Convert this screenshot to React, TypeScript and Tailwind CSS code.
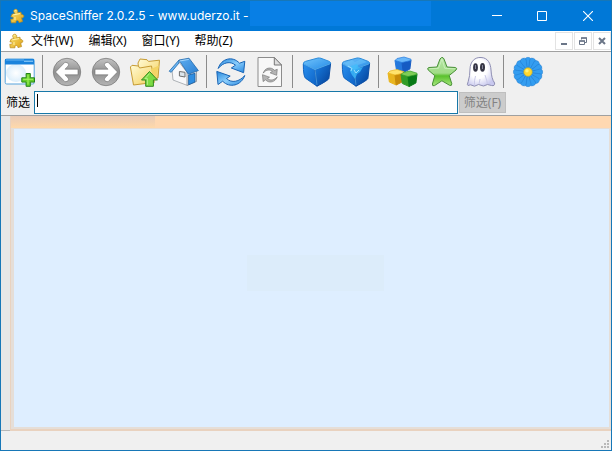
import type { ReactNode } from 'react';

interface ToolProps {
  label: string;
  children: ReactNode;
}

const menus = ['文件(W)', '编辑(X)', '窗口(Y)', '帮助(Z)'];

const PuzzleIcon = () => (
  <svg viewBox="0 0 16 16" className="h-4 w-4 shrink-0" aria-hidden="true">
    <path
      d="M3 6.2L6 5.4C4.6 4.2 4.3 2.8 5.2 1.8C6.2.8 8 1.1 8.6 2.4C8.9 3.2 8.6 4 8.7 4.8L12 4.2L12.4 6.6C13.4 6.1 14.9 6.9 14.8 8.3C14.7 9.6 13.5 10.1 12.5 9.8L13.6 13.6L10 14.6C9.9 13.2 9.2 12.3 8.2 12.4C7.2 12.5 6.8 13.4 7 14.8L2.2 14.8L1.8 11.2C3.2 11.4 4.3 11 4.3 10C4.3 9 3.2 8.8 1.9 9Z"
      fill="url(#gold)"
      stroke="#b98a1c"
      strokeWidth="0.7"
    />
    <path d="M5.8 3.2Q6.2 1.9 7.3 2.2M4.2 6.8L8 6.2L11 5.6M6 9V12" stroke="#fff3a8" fill="none" />
  </svg>
);

const Gradients = () => (
  <svg className="absolute h-0 w-0" aria-hidden="true">
    <defs>
      <linearGradient id="gold" x1="0" y1="0" x2="1" y2="1">
        <stop offset="0" stopColor="#fbe477" />
        <stop offset="1" stopColor="#dfa315" />
      </linearGradient>
      <linearGradient id="folder" x1="0" y1="0" x2="1" y2="1">
        <stop offset="0" stopColor="#fffbd5" />
        <stop offset="1" stopColor="#f5cf5b" />
      </linearGradient>
      <linearGradient id="metal" x1="0" y1="0" x2="0" y2="1">
        <stop offset="0" stopColor="#c4c4c4" />
        <stop offset="0.5" stopColor="#909090" />
        <stop offset="1" stopColor="#b5b5b5" />
      </linearGradient>
      <linearGradient id="sky" x1="0" y1="0" x2="1" y2="1">
        <stop offset="0" stopColor="#2486dc" />
        <stop offset="0.5" stopColor="#8acdfb" />
        <stop offset="1" stopColor="#2788e0" />
      </linearGradient>
      <linearGradient id="roof" x1="0" y1="0" x2="1" y2="1">
        <stop offset="0" stopColor="#5eaef0" />
        <stop offset="1" stopColor="#2b7fd2" />
      </linearGradient>
      <linearGradient id="cubeTop" x1="0" y1="0" x2="1" y2="1">
        <stop offset="0" stopColor="#72c4fb" />
        <stop offset="1" stopColor="#238ae7" />
      </linearGradient>
      <linearGradient id="cubeLeft" x1="0" y1="0" x2="1" y2="1">
        <stop offset="0" stopColor="#2a90ee" />
        <stop offset="1" stopColor="#0b60c4" />
      </linearGradient>
      <linearGradient id="cubeRight" x1="0" y1="0" x2="1" y2="1">
        <stop offset="0" stopColor="#1a80e4" />
        <stop offset="1" stopColor="#043e94" />
      </linearGradient>
      <linearGradient id="leaf" x1="0" y1="0" x2="0" y2="1">
        <stop offset="0" stopColor="#b4e5a4" />
        <stop offset="0.55" stopColor="#a1dc87" />
        <stop offset="0.65" stopColor="#59c12c" />
        <stop offset="1" stopColor="#a9e780" />
      </linearGradient>
      <radialGradient id="ghost" cx="0.4" cy="0.4" r="0.65">
        <stop offset="0.5" stopColor="#ffffff" />
        <stop offset="1" stopColor="#c8c8ee" />
      </radialGradient>
      <radialGradient id="glow">
        <stop offset="0" stopColor="#ffffff" />
        <stop offset="1" stopColor="#dceefb" />
      </radialGradient>
    </defs>
  </svg>
);

const Tool = ({ label, children }: ToolProps) => (
  <button type="button" aria-label={label} className="flex h-10 w-[39px] shrink-0 items-center justify-start pl-[3px]">
    <svg viewBox="0 0 32 32" className="h-8 w-8" aria-hidden="true">
      {children}
    </svg>
  </button>
);

const Separator = () => (
  <div className="flex w-2 shrink-0 py-[3px] pl-[2px]">
    <div className="w-px bg-[#8b8b8b]" />
  </div>
);

const Arrow = ({ flip = false }: { flip?: boolean }) => (
  <g transform={flip ? 'translate(32 0) scale(-1 1)' : undefined}>
    <circle cx="16" cy="16" r="13.7" fill="url(#metal)" stroke="#7c7c7c" strokeWidth="0.8" />
    <path
      d="M4.5 16L14 6.2Q18.8 6.8 17.2 9.9L14 13.2H27V18.8H14L17.2 22.1Q18.8 25.2 14 25.8Z"
      fill="#fff"
      stroke="#6c6c6c"
      strokeWidth="0.6"
    />
  </g>
);

const Cycle = ({ fill, stroke }: { fill: string; stroke: string }) => (
  <g fill={fill} stroke={stroke} strokeLinejoin="round">
    <path d="M3.2 12.5C6.2 2.5 17.5-.5 24.5 7.2L29.8 5.3L28.6 16.7L16.3 12L20.5 9.2C15.5 4.8 8.1 6.2 3.2 12.5Z" />
    <path d="M29.8 19.5C26.2 29.5 14.7 32.6 7.7 25.2L3 28.5L1.8 15.4L15.2 20.1L11.5 22.5C16.6 27.5 24.2 25.8 29.8 19.5Z" />
  </g>
);

const Cube = () => (
  <g strokeLinejoin="round">
    <path d="M2.3 8L14 13.5L16 30.2L4.6 22.3Q2.3 20.6 2.3 8Z" fill="url(#cubeLeft)" stroke="#1264bf" />
    <path d="M14 13.5L29.6 7.5L27.9 22.4Q27.4 24.3 16 30.2Z" fill="url(#cubeRight)" stroke="#0b4ea5" />
    <path d="M2.3 8Q2.2 5.9 4.7 5.3L17 2Q18.2 1.8 20 2.3L28.3 5.4Q29.8 6.2 29.6 7.5L14 13.5Z" fill="url(#cubeTop)" stroke="#2e8cda" />
    <path d="M3 8.2L14 13.5L29 7.8M14 13.5L16 29" fill="none" stroke="#68baf4" strokeWidth="0.6" />
  </g>
);

interface BlockProps {
  x: number;
  y: number;
  top: string;
  left: string;
  right: string;
}

const Block = ({ x, y, top, left, right }: BlockProps) => (
  <g transform={`translate(${x} ${y})`} strokeLinejoin="round">
    <path d="M0 4L7 6L8.2 16L1.4 13Z" fill={left} stroke={left} />
    <path d="M7 6L16 3.7L14.9 12.5L8.2 16Z" fill={right} stroke={right} />
    <path d="M0 4L2 2L9 .5L16 2.7V4L7 6Z" fill={top} stroke={left} strokeWidth="0.7" />
  </g>
);

const petals = Array.from({ length: 16 }, (_, i) => i * 22.5);

const Toolbar = () => (
  <div role="toolbar" className="flex h-[39px] items-stretch overflow-hidden">
    <Tool label="新建">
      <rect x="1.2" y="3" width="29" height="25" rx="1.5" fill="#fff" stroke="#56a3dc" />
      <ellipse cx="12" cy="17" rx="10" ry="9" fill="url(#glow)" />
      <path d="M1 3H30V8.5H1Z" fill="#1a83dc" />
      <path d="M2 4H20" stroke="#67b5f2" />
      <path d="M20 5.2H29" stroke="#a3daff" />
      <path d="M22.1 17.5H26.3V21.8H30.5V26.1H26.3V30.3H22.1V26.1H17.8V21.8H22.1Z" fill="#67cf29" stroke="#21821b" />
      <path d="M24 18.8V28.5M19.2 23.3H29" stroke="#a4f363" />
    </Tool>
    <Separator />
    <Tool label="后退">
      <Arrow />
    </Tool>
    <Tool label="前进">
      <Arrow flip />
    </Tool>
    <Tool label="向上">
      <path d="M9 7L11 3L18 3.7L19.5 5.4L30.5 4.2L29 22L11 26Z" fill="url(#folder)" stroke="#c79c34" />
      <path d="M1.4 11L3 9.3L9.4 10L10.6 12L22.5 10L25.3 26.4L4.5 29Z" fill="url(#folder)" stroke="#c79c34" />
      <path d="M22 13L25.5 26L30 9.5" fill="#f4d465" />
      <path d="M20.5 15.5L28.5 24H24.4V30.3H16.7V24H12.5Z" fill="#7cdb43" stroke="#328920" />
      <path d="M20.5 17.6L16 22.6H18.4V28.9" fill="none" stroke="#b3f08a" />
    </Tool>
    <Tool label="主页">
      <path d="M4 14L11 6L19.5 17V29.5L5 24Z" fill="#f7f8fa" stroke="#9ca1a6" strokeWidth="0.8" />
      <path d="M19 16.5L28.5 14V25.5L19 29.5Z" fill="#e3e6e9" stroke="#8d9196" strokeWidth="0.8" />
      <path d="M11 4L21 2.2L30.4 14.6L20.4 18.2Z" fill="url(#roof)" stroke="#2369ac" strokeWidth="0.8" />
      <path d="M11 4L1.2 15.2L3.2 16.3L11 7Z" fill="#69b5f2" stroke="#2369ac" strokeWidth="0.8" />
      <path d="M11.6 5L20.8 3.4" stroke="#a6d6fb" />
      <path d="M20.6 19L27 17.3V26L20.6 28.8Z" fill="#2f8ee2" stroke="#195b9c" strokeWidth="0.8" />
      <path d="M11.4 15.5L17 16.3V21L11.4 20Z" fill="#dbe5ec" stroke="#6f6f6f" />
    </Tool>
    <Separator />
    <Tool label="刷新">
      <Cycle fill="url(#sky)" stroke="#1964b5" />
    </Tool>
    <Tool label="刷新视图">
      <path d="M4 1.5H20.3L27.5 9V30.5H4Z" fill="#f8f8f8" stroke="#8c8c8c" />
      <path d="M20.3 1.5V9H27.5Z" fill="#ddd" stroke="#777" />
      <g transform="translate(7.5 10.5) scale(.53)">
        <Cycle fill="#b4b4b4" stroke="#5e5e5e" />
      </g>
    </Tool>
    <Separator />
    <Tool label="较少细节">
      <Cube />
    </Tool>
    <Tool label="更多细节">
      <Cube />
      <path d="M5 7L12 4L15 6L21 3L27 6L18 9L15 14L11 12L7 11Z" fill="#6cc6fb" opacity="0.5" />
      <path d="M11 10L17 8L19 12L23 11L20 16L17 18L15 23L12 19L10 15Z" fill="#3fbdfb" opacity="0.75" />
      <path d="M8 10L12 12.5L11 15M14 14L16 17L19 14" fill="none" stroke="#a5e4ff" strokeWidth="0.9" />
    </Tool>
    <Separator />
    <Tool label="可用空间">
      <Block x={8} y={0.5} top="#69b7fa" left="#2478dd" right="#155bc3" />
      <Block x={1} y={13} top="#ffe36d" left="#e9b51f" right="#c78b09" />
      <Block x={14} y={14.5} top="#7fcd58" left="#339d26" right="#087a16" />
    </Tool>
    <Tool label="标签">
      <path
        d="M15.6 1.5Q17.2 1.1 18 3L21 11L29.5 11.5Q31.6 12.2 30 14L23.2 19.5L25.8 27.8Q25.9 30.2 23.6 29.3L15.9 24.8L8.5 29.6Q6.2 30.6 6.4 28L8.8 19.7L2.2 14Q.8 12 3 11.5L11 11L14 3Z"
        fill="url(#leaf)"
        stroke="#489037"
      />
      <path d="M16 3L18.7 12.3L29 12.8M16 3L12.5 12.3L3.5 12.7" fill="none" stroke="#d0f3c2" strokeWidth="0.8" />
    </Tool>
    <Tool label="幽灵">
      <path
        d="M5 13C5.2 5.5 10 1 16 1.5C23 1.7 25.6 7.5 26 14C26.3 20 27.5 24 29.6 27Q30 30.3 26.5 29.5L22.5 28.5L18.5 30L13.5 28.5L9.5 30.2L5.5 28.8L3 29.5Q1.6 29.3 3.2 25.5Q5 20 5 13Z"
        fill="url(#ghost)"
        stroke="#8e8eb2"
      />
      <path d="M10.5 20Q9 25 9.5 29M20 19Q22 25 22.5 28M15 23L14 28" fill="none" stroke="#cacae9" />
      <ellipse cx="10.5" cy="11.5" rx="2.4" ry="4.3" fill="#353544" />
      <ellipse cx="17.5" cy="11.3" rx="2.5" ry="4.4" fill="#353544" />
      <path d="M10.5 9V13M17.5 9V13" stroke="#85859b" />
    </Tool>
    <Separator />
    <Tool label="关于">
      <circle cx="16" cy="16" r="12.5" fill="#208ce8" />
      {petals.map((angle) => (
        <path
          key={angle}
          d="M15.5 13L12.9 3.8Q13.2 1.3 16 1.3Q18.8 1.3 19 3.8L16.5 13Z"
          transform={`rotate(${angle} 16 16)`}
          fill="#349df0"
          stroke="#1a74c8"
          strokeWidth="0.4"
        />
      ))}
      <circle cx="16" cy="16" r="4.2" fill="#ffd72e" stroke="#c7b22c" strokeWidth="0.7" />
      <circle cx="15" cy="14.8" r="1.7" fill="#fff173" />
    </Tool>
  </div>
);

const TitleBar = () => (
  <header className="flex h-[30px] items-center bg-[#0078d7] pl-2 text-white">
    <PuzzleIcon />
    <h1 className="ml-[5px] whitespace-nowrap font-[Inter,sans-serif] text-[12px] leading-4">
      SpaceSniffer 2.0.2.5 - www.uderzo.it -
    </h1>
    <div className="ml-px h-[25px] max-w-[181px] flex-1 self-start bg-[#087fe5]" />
    <div className="ml-auto flex self-stretch">
      <button type="button" aria-label="最小化" className="flex w-[45px] items-center justify-center">
        <svg viewBox="0 0 10 10" className="h-[10px] w-[10px]">
          <path d="M0 4.5H10" stroke="currentColor" />
        </svg>
      </button>
      <button type="button" aria-label="最大化" className="flex w-[45px] items-center justify-center">
        <svg viewBox="0 0 10 10" className="h-[10px] w-[10px]">
          <path d="M.5.5H9.5V9.5H.5Z" fill="none" stroke="currentColor" />
        </svg>
      </button>
      <button type="button" aria-label="关闭" className="flex w-[47px] items-center justify-center">
        <svg viewBox="0 0 10 10" className="h-[10px] w-[10px]">
          <path d="M0 0L10 10M10 0L0 10" stroke="currentColor" strokeWidth="1.1" />
        </svg>
      </button>
    </div>
  </header>
);

const MenuBar = () => (
  <nav className="flex h-[20px] items-center bg-white pl-[7px]">
    <PuzzleIcon />
    <div className="ml-[7px] flex gap-[15px]">
      {menus.map((menu) => (
        <button key={menu} type="button" className="whitespace-nowrap">
          {menu}
        </button>
      ))}
    </div>
    <div className="ml-auto flex gap-px text-[#6b7688]">
      <button type="button" aria-label="最小化子窗口" className="flex h-[18px] w-[18px] items-center justify-center border border-[#e3e3e3]">
        <svg viewBox="0 0 8 8" className="h-2 w-2">
          <path d="M1 7H7" stroke="currentColor" strokeWidth="2" />
        </svg>
      </button>
      <button type="button" aria-label="还原子窗口" className="flex h-[18px] w-[18px] items-center justify-center border border-[#e3e3e3]">
        <svg viewBox="0 0 8 8" className="h-2 w-2">
          <path d="M2.5 2.5V1H7.5V5.5H6M.5 7.5V4H5.5V7.5Z" fill="none" stroke="currentColor" />
          <path d="M2 1H8M0 4H6" stroke="currentColor" strokeWidth="1.5" />
        </svg>
      </button>
      <button type="button" aria-label="关闭子窗口" className="flex h-[18px] w-[18px] items-center justify-center border border-[#e3e3e3]">
        <svg viewBox="0 0 8 8" className="h-2 w-2">
          <path d="M1 1L7 7M7 1L1 7" stroke="currentColor" strokeWidth="2" />
        </svg>
      </button>
    </div>
  </nav>
);

const FilterBar = () => (
  <form className="flex h-[24px] items-start pl-[5px]" onSubmit={(e) => e.preventDefault()}>
    <label htmlFor="filter" className="w-7 shrink-0 leading-6">
      筛选
    </label>
    <div className="relative flex min-w-0 max-w-[424px] flex-1">
      <input
        id="filter"
        type="text"
        className="h-[23px] w-full border border-[#1878a8] bg-white px-[2px] caret-transparent outline-none"
      />
      <span className="pointer-events-none absolute left-[3px] top-[3px] h-[13px] w-px bg-black" />
    </div>
    <button
      type="submit"
      disabled
      className="ml-px mt-px h-[21px] w-[47px] shrink-0 border border-[#bfbfbf] bg-[#cccccc] text-[#838383]"
    >
      筛选(F)
    </button>
  </form>
);

const Workspace = () => (
  <main className="flex flex-1 border-t border-[#a0a0a0]">
    <div className="w-[9px] shrink-0 border-b border-[#b8b8b8] bg-[#e7e7e7]" />
    <div className="flex flex-1 flex-col border-b-2 border-l border-[#e9d2bf] bg-[#e5ded8]">
      <div className="h-3 bg-[#ffd8b1]">
        <div className="h-full w-36 bg-linear-to-b from-[#e9cbb8] to-[#ffd9aa]" />
      </div>
      <div className="mb-[2px] ml-[3px] mr-[2px] mt-px flex flex-1 items-center justify-center bg-[#deeeff] pb-[10px] pl-2">
        <div className="h-9 w-[137px] bg-[#dcecfa]" />
      </div>
    </div>
  </main>
);

const StatusBar = () => (
  <footer className="flex h-[19px] items-end justify-end p-[2px]">
    <svg viewBox="0 0 8 8" className="h-2 w-2" aria-hidden="true">
      <path d="M6 0H8V2H6ZM3 3H5V5H3ZM6 3H8V5H6ZM0 6H2V8H0ZM3 6H5V8H3ZM6 6H8V8H6Z" fill="#b8b8b8" />
    </svg>
  </footer>
);

export default function App() {
  return (
    <div className="flex min-h-screen flex-col border border-[#1777b7] bg-[#f0f0f0] font-['Noto_Sans','Noto_Sans_CJK_SC',sans-serif] text-[12px] leading-4 text-black">
      <Gradients />
      <TitleBar />
      <MenuBar />
      <div className="border-t border-[#a0a0a0]">
        <Toolbar />
        <FilterBar />
      </div>
      <Workspace />
      <StatusBar />
    </div>
  );
}
